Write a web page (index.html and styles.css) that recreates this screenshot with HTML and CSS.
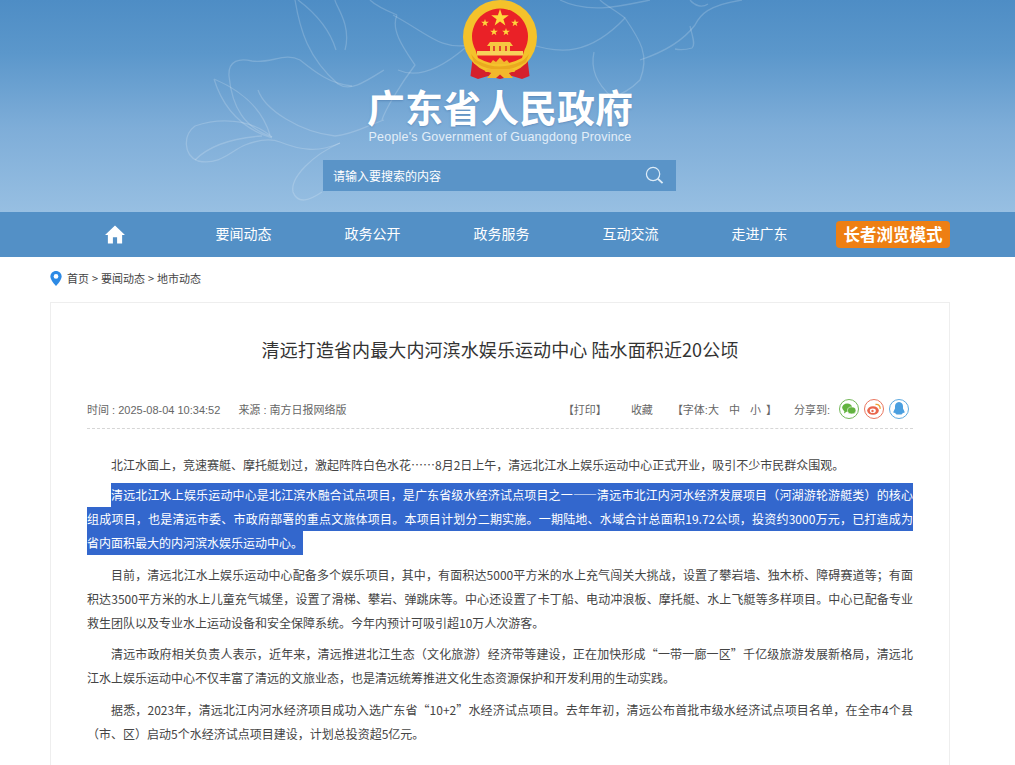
FILE: index.html
```html
<!DOCTYPE html>
<html lang="zh-CN">
<head>
    <meta charset="UTF-8">
    <meta name="viewport" content="width=device-width, initial-scale=1.0">
    <title>清远打造省内最大内河滨水娱乐运动中心 陆水面积近20公顷</title>
    <link rel="stylesheet" href="styles.css">
</head>
<body>
    <!-- Header -->
    <header class="header">
        <svg class="header-lines" viewBox="0 0 1015 212" fill="none" stroke="#fff" stroke-opacity="0.18" stroke-width="1.3">
            <path d="M295 0C300 30 308 58 338 84M338 84C350 92 365 82 384 70M298 0C318 15 330 30 336 50"/>
            <path d="M272 137C245 128 232 108 229 76C228 60 240 58 252 61C270 64 285 52 300 60C315 72 330 84 352 86"/>
            <path d="M214 79C222 105 240 128 272 138M214 79C240 90 262 108 270 135M258 90C265 110 300 132 335 136C355 134 368 125 384 120"/>
            <path d="M272 137C250 118 218 118 195 126C183 135 183 155 198 161C220 166 232 150 245 145C258 140 270 138 280 142C300 150 318 153 340 143"/>
            <path d="M195 160C210 145 232 138 262 136"/>
            <path d="M340 143C312 155 290 178 293 192C298 205 310 200 322 192"/>
            <path d="M397 15C390 30 405 50 415 65C400 85 385 110 382 120M345 50C352 25 335 5 335 0M397 15C385 10 375 5 370 0"/>
            <path d="M393 15C430 35 440 50 470 45M398 70C420 80 445 65 465 48"/>
            <path d="M527 43C560 55 590 55 625 18C640 40 650 55 640 80C630 90 620 95 612 97C598 85 590 70 594 52"/>
            <path d="M625 18C615 10 605 5 600 0M640 60C655 55 680 45 695 25C700 15 708 5 742 0"/>
            <path d="M690 26C692 35 696 45 692 48C685 50 680 50 675 49M690 0C695 6 702 8 708 4"/>
            <path d="M560 0C590 15 625 5 650 0"/>
        </svg>
        <div class="header-inner">
            <svg class="emblem" viewBox="0 0 80 80">
                <path d="M13 55L10.500 76L18 79L28 76L40 79L52 76L62 79L69.500 76L67 55L40 62Z" fill="#d5202c"/>
                <circle cx="40" cy="37" r="37" fill="#f4c22b"/>
                <path d="M15.500 50A28 28 0 1 1 64.500 50L62 58Q40 70 18 58Z" fill="#ea2127"/>
                <path d="M11 54Q16 60 18 61Q40 72 62 61Q64 60 69 54L66 62Q40 78 14 62Z" fill="#eaa91f"/>
                <path d="M30 64L33 60L36 62L40 57.500L44 62L47 60L50 64Z" fill="#f3b82c"/>
                <path d="M27 69H53L55 72H48L53 78H44L40 74.500L36 78H27L32 72H25Z" fill="#f3b82c"/>
                <path d="M40 9L42.100 15.300H48.800L43.400 19.200L45.400 25.500L40 21.600L34.600 25.500L36.600 19.200L31.200 15.300H37.900Z" fill="#ffd83c"/>
                <path d="M25 19L25.900 21.800H28.900L26.500 23.500L27.400 26.300L25 24.600L22.600 26.300L23.500 23.500L21.100 21.800H24.100Z" fill="#ffd83c"/>
                <path d="M55 19L55.900 21.800H58.900L56.500 23.500L57.400 26.300L55 24.600L52.600 26.300L53.500 23.500L51.100 21.800H54.100Z" fill="#ffd83c"/>
                <path d="M34 28L34.900 30.800H37.900L35.500 32.500L36.400 35.300L34 33.600L31.600 35.300L32.500 32.500L30.100 30.800H33.100Z" fill="#ffd83c"/>
                <path d="M46 28L46.900 30.800H49.900L47.500 32.500L48.400 35.300L46 33.600L43.600 35.300L44.500 32.500L42.100 30.800H45.100Z" fill="#ffd83c"/>
                <path d="M30 42H50L53 46H50V51H30V46H27Z" fill="#f6c741"/>
                <rect x="17" y="51" width="46" height="4.500" fill="#f7d15a"/>
                <path d="M33 46h2v5h-2zM39 46h2v5h-2zM45 46h2v5h-2z" fill="#e0472f"/>
            </svg>
            <div class="site-title">广东省人民政府</div>
            <div class="site-sub">People's Government of Guangdong Province</div>
            <div class="search-box">
                <span class="search-text">请输入要搜索的内容</span>
                <svg class="search-icon" viewBox="0 0 20 20" fill="none" stroke="#dcebf7" stroke-width="1.300">
                    <circle cx="8.500" cy="8.500" r="7"/>
                    <path d="M13.500 13.500L18.500 18" stroke-width="2"/>
                </svg>
            </div>
        </div>
    </header>

    <!-- Nav -->
    <nav class="nav">
        <div class="nav-inner">
            <a class="nav-item" href="#">
                <svg class="home-icon" viewBox="0 0 22 20" fill="#fff">
                    <path d="M11 .5L.500 10.500H3.500V19.500H8.800V13H13.200V19.500H18.500V10.500H21.500Z"/>
                </svg>
            </a>
            <a class="nav-item" href="#">要闻动态</a>
            <a class="nav-item" href="#">政务公开</a>
            <a class="nav-item" href="#">政务服务</a>
            <a class="nav-item" href="#">互动交流</a>
            <a class="nav-item" href="#">走进广东</a>
            <a class="elder-btn" href="#">长者浏览模式</a>
        </div>
    </nav>

    <div class="page">
        <!-- Breadcrumb -->
        <div class="crumb">
            <svg class="pin-icon" viewBox="0 0 12 16">
                <path d="M6 0C2.700 0 0 2.600 0 5.900C0 10 6 16 6 16S12 10 12 5.900C12 2.600 9.300 0 6 0Z" fill="#2d8ae5"/>
                <circle cx="6" cy="5.800" r="2.500" fill="#fff"/>
            </svg>
            <span>首页 &gt; 要闻动态 &gt; 地市动态</span>
        </div>

        <!-- Article -->
        <div class="article">
            <h1 class="article-title">清远打造省内最大内河滨水娱乐运动中心 陆水面积近20公顷</h1>

            <div class="meta">
                <div class="meta-left">
                    <span>时间 : 2025-08-04 10:34:52</span>
                    <span>来源 : 南方日报网络版</span>
                </div>
                <div class="meta-right">
                    <span class="meta-print">【打印】</span>
                    <span class="meta-fav">收藏</span>
                    <span class="meta-font">【字体:<i>大</i><i>中</i><i>小</i>】</span>
                    <span class="meta-share">分享到:</span>
                    <a class="share share-wx" href="#">
                        <svg viewBox="0 0 14 12" fill="#62b33f">
                            <ellipse cx="5.200" cy="4.600" rx="5" ry="4.200"/>
                            <ellipse cx="9.700" cy="7.400" rx="4.200" ry="3.500" stroke="#fff" stroke-width=".6"/>
                            <path d="M2.500 7.500L2 10.500L5 8.500Z"/>
                        </svg>
                    </a>
                    <a class="share share-wb" href="#">
                        <svg viewBox="0 0 14 12">
                            <ellipse cx="6" cy="7.500" rx="5.800" ry="4.300" fill="#e9654b"/>
                            <ellipse cx="5.800" cy="7.800" rx="3" ry="2.300" fill="#fff"/>
                            <circle cx="5.500" cy="8" r="1.200" fill="#e9654b"/>
                            <path d="M8.500 1.500C11.500 1 13.500 3 13 5.800" fill="none" stroke="#f0a030" stroke-width="1.300"/>
                        </svg>
                    </a>
                    <a class="share share-qq" href="#">
                        <svg viewBox="0 0 12 14" fill="#4a9fe0">
                            <path d="M6 0C3.200 0 2 2.300 2 4.500V6.500L.500 9.500C.300 11 1 11.500 2 10.500C2.300 11.500 3 12 3.500 12.500H8.500C9 12 9.700 11.500 10 10.500C11 11.500 11.700 11 11.500 9.500L10 6.500V4.500C10 2.300 8.800 0 6 0Z"/>
                        </svg>
                    </a>
                </div>
            </div>

            <div class="content">
                <p class="para-1"><span class="ln first end">北江水面上，竞速赛艇、摩托艇划过，激起阵阵白色水花……8月2日上午，清远北江水上娱乐运动中心正式开业，吸引不少市民群众围观。</span></p>
                <p class="para-picked">
                    <span class="ln first picked">清远北江水上娱乐运动中心是北江滨水融合试点项目，是广东省级水经济试点项目之一——清远市北江内河水经济发展项目（河湖游轮游艇类）的核心</span>
                    <span class="ln picked">组成项目，也是清远市委、市政府部署的重点文旅体项目。本项目计划分二期实施。一期陆地、水域合计总面积19.72公顷，投资约3000万元，已打造成为</span>
                    <span class="ln end picked">省内面积最大的内河滨水娱乐运动中心。</span>
                </p>
                <p>
                    <span class="ln first">目前，清远北江水上娱乐运动中心配备多个娱乐项目，其中，有面积达5000平方米的水上充气闯关大挑战，设置了攀岩墙、独木桥、障碍赛道等；有面</span>
                    <span class="ln">积达3500平方米的水上儿童充气城堡，设置了滑梯、攀岩、弹跳床等。中心还设置了卡丁船、电动冲浪板、摩托艇、水上飞艇等多样项目。中心已配备专业</span>
                    <span class="ln end">救生团队以及专业水上运动设备和安全保障系统。今年内预计可吸引超10万人次游客。</span>
                </p>
                <p class="para-4">
                    <span class="ln first">清远市政府相关负责人表示，近年来，清远推进北江生态（文化旅游）经济带等建设，正在加快形成“一带一廊一区”千亿级旅游发展新格局，清远北</span>
                    <span class="ln end">江水上娱乐运动中心不仅丰富了清远的文旅业态，也是清远统筹推进文化生态资源保护和开发利用的生动实践。</span>
                </p>
                <p>
                    <span class="ln first">据悉，2023年，清远北江内河水经济项目成功入选广东省“10+2”水经济试点项目。去年年初，清远公布首批市级水经济试点项目名单，在全市4个县</span>
                    <span class="ln end">（市、区）启动5个水经济试点项目建设，计划总投资超5亿元。</span>
                </p>
            </div>
        </div>
    </div>
</body>
</html>
```

FILE: styles.css
```css
* {
    box-sizing: border-box;
}
body {
    margin: 0;
    font-family: "Liberation Sans", "Noto Sans CJK SC", sans-serif;
    color: #333;
    background-color: #fff;
}
a {
    color: inherit;
    text-decoration: none;
}

/* header */
.header {
    position: relative;
    height: 212px;
    overflow: hidden;
    background: linear-gradient(#4e8dc5 0%, #5b97cb 25%, #7eadd8 60%, #97bfe2 100%);
}
.header-lines {
    position: absolute;
    left: 0;
    top: 0;
    width: 1015px;
    height: 212px;
}
.header-inner {
    position: relative;
    width: 1000px;
    display: flex;
    flex-direction: column;
    align-items: center;
}
.emblem {
    display: block;
    width: 80px;
    height: 80px;
}
.site-title {
    margin-top: 6px;
    font-family: "Noto Sans CJK SC", sans-serif;
    font-size: 38px;
    font-weight: 700;
    line-height: 40px;
    color: #fff;
    text-shadow: 0 1px 2px rgba(60, 100, 150, 0.4);
}
.site-sub {
    margin-top: 4px;
    font-size: 12.5px;
    line-height: 14px;
    letter-spacing: 0.2px;
    color: #e3eef8;
}
.search-box {
    width: 353px;
    height: 31px;
    margin: 16px 1px 0 0;
    padding: 0 12px 0 10px;
    display: flex;
    align-items: center;
    justify-content: space-between;
    background-color: #5a94c8;
}
.search-text {
    font-family: "Noto Sans CJK SC", sans-serif;
    font-size: 12px;
    color: #fff;
}
.search-icon {
    width: 19px;
    height: 19px;
}

/* nav */
.nav {
    height: 45px;
    background-color: #5390c6;
}
.nav-inner {
    width: 900px;
    height: 45px;
    margin-left: 50px;
    display: flex;
    align-items: center;
}
.nav-item {
    width: 129px;
    padding-bottom: 4px;
    display: flex;
    justify-content: center;
    align-items: center;
    font-family: "Noto Sans CJK SC", sans-serif;
    font-size: 14px;
    color: #fff;
}
.home-icon {
    width: 22px;
    height: 19px;
    margin-top: 4px;
}
.elder-btn {
    width: 114px;
    height: 27px;
    margin-left: 12px;
    border-radius: 4px;
    background-color: #ee7f13;
    font-family: "Noto Sans CJK SC", sans-serif;
    font-size: 16.5px;
    font-weight: 700;
    line-height: 27px;
    text-align: center;
    color: #fff;
}

/* breadcrumb */
.page {
    width: 900px;
    margin-left: 50px;
}
.crumb {
    height: 45px;
    padding-bottom: 3px;
    display: flex;
    align-items: center;
    font-family: "Noto Sans CJK SC", sans-serif;
    font-size: 11px;
    word-spacing: 0.5px;
    color: #444;
}
.pin-icon {
    width: 12px;
    height: 15px;
    margin-right: 5px;
}

/* article */
.article {
    border: 1px solid #eee;
    padding: 0 36px 30px;
}
.article-title {
    margin: 0;
    padding-top: 31px;
    font-family: "Noto Sans CJK SC", sans-serif;
    font-size: 18px;
    font-weight: 400;
    line-height: 30px;
    letter-spacing: 0.1px;
    text-align: center;
    color: #333;
}
.meta {
    height: 39px;
    margin-top: 26px;
    display: flex;
    justify-content: space-between;
    align-items: center;
    border-bottom: 1px dashed #d6d6d6;
    font-size: 11px;
    color: #666;
}
.meta-left span {
    margin-right: 15px;
}
.meta-right {
    margin-right: 4px;
    display: flex;
    align-items: center;
}
.meta-print {
    margin-right: 24px;
}
.meta-fav {
    margin-right: 19px;
}
.meta-font {
    margin-right: 17px;
}
.meta-font i {
    font-style: normal;
    margin-left: 10px;
}
.meta-font i:first-child {
    margin-left: 0;
}
.meta-font i:last-child {
    margin-right: 5px;
}
.meta-share {
    margin-right: 9px;
}
.share {
    width: 20px;
    height: 20px;
    margin-left: 5px;
    border: 1px solid;
    border-radius: 50%;
    display: flex;
    align-items: center;
    justify-content: center;
}
.share:first-of-type {
    margin-left: 0;
}
.share svg {
    width: 14px;
    height: 14px;
}
.share-wx {
    border-color: #75b85a;
}
.share-wb {
    border-color: #e9765f;
}
.share-qq {
    border-color: #5eaae0;
}

/* article text, one block per line to hold the original breaks */
.content {
    padding-top: 24px;
    font-family: "Noto Sans CJK SC", sans-serif;
    font-size: 12px;
    line-height: 24px;
    color: #444;
}
.content p {
    margin: 0 0 7px;
}
.content .para-1 {
    margin-bottom: 6px;
}
.content .para-picked {
    margin-bottom: 8px;
}
.content .para-4 {
    margin-bottom: 8px;
}
.ln {
    display: block;
    text-align: justify;
    text-align-last: justify;
}
.ln.first {
    margin-left: 24px;
}
.ln.end {
    width: fit-content;
    text-align-last: left;
}
.picked {
    background-color: #3367cd;
    color: #fff;
}
```
